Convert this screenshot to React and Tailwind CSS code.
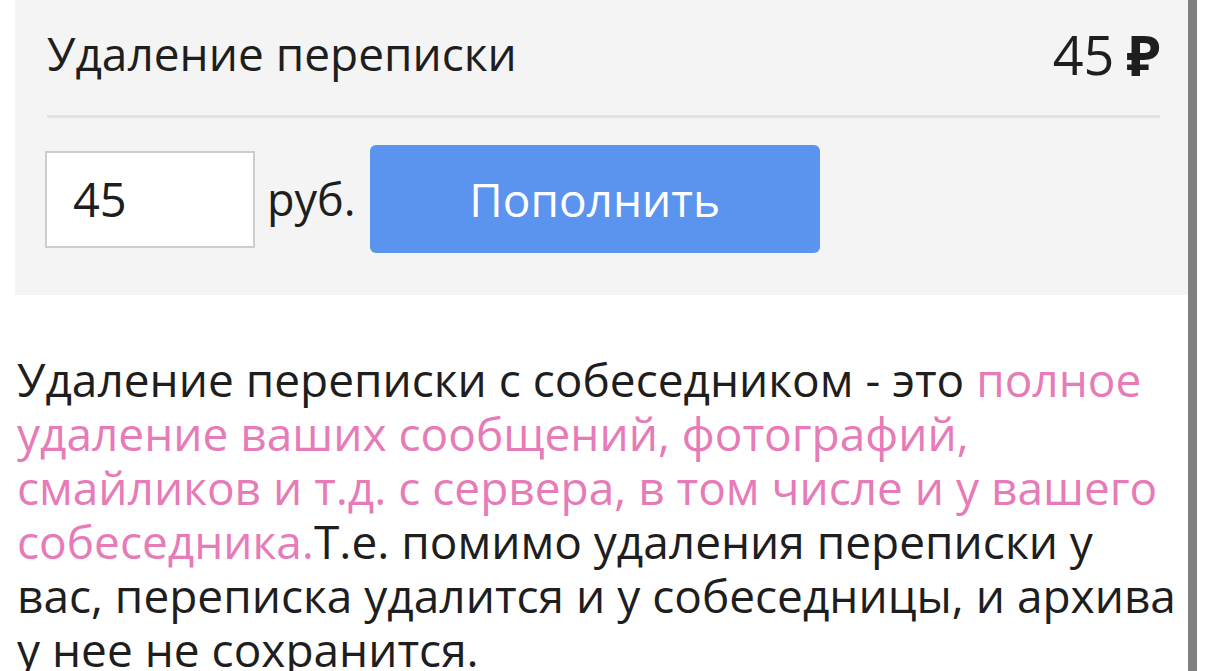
export default function App() {
  const font = { fontFamily: '"Open Sans", "Noto Sans", sans-serif' };
  return (
    <div className="w-[1206px] h-[671px] bg-white overflow-hidden flex" style={font}>
      <div className="w-[1188px] shrink-0 flex flex-col">
        <div className="shrink-0 ml-[15px] h-[295px] bg-[#f4f4f4] pl-[32px] pr-[28px] flex flex-col">
          <div className="shrink-0 h-[115px] pb-[8px] flex items-center justify-between text-[46px] text-[#1e1e1e]">
            <span>Удаление переписки</span>
            <span className="flex items-center leading-none">
              <span className="text-[54px]">45</span>
              <span className="ml-[12px] font-bold text-[56px]">₽</span>
            </span>
          </div>
          <div className="shrink-0 h-[3px] bg-[#e2e2e2]" />
          <div className="shrink-0 mt-[27px] flex items-center">
            <div className="ml-[-2px] w-[210px] h-[97px] bg-white border-2 border-[#cdcdcd] flex items-center pl-[26px] text-[47px] text-[#1e1e1e]">
              45
            </div>
            <span className="ml-[12px] text-[45px] text-[#1e1e1e]">руб.</span>
            <button className="ml-[14px] w-[450px] h-[108px] rounded-[6px] bg-[#5b94ef] text-white text-[46px]">
              Пополнить
            </button>
          </div>
        </div>
        <p className="shrink-0 mt-[57px] pl-[17px] text-[46px] leading-[54px] text-[#1e1e1e] whitespace-nowrap">
          Удаление переписки с собеседником - это <span className="text-[#e67bb7]">полное</span>
          <br />
          <span className="text-[#e67bb7]">удаление ваших сообщений, фотографий,</span>
          <br />
          <span className="text-[#e67bb7]">смайликов и т.д. с сервера, в том числе и у вашего</span>
          <br />
          <span className="text-[#e67bb7]">собеседника.</span>Т.е. помимо удаления переписки у
          <br />
          вас, переписка удалится и у собеседницы, и архива
          <br />
          у нее не сохранится.
        </p>
      </div>
      <div className="w-[9px] shrink-0 bg-[#808080]" />
    </div>
  );
}
